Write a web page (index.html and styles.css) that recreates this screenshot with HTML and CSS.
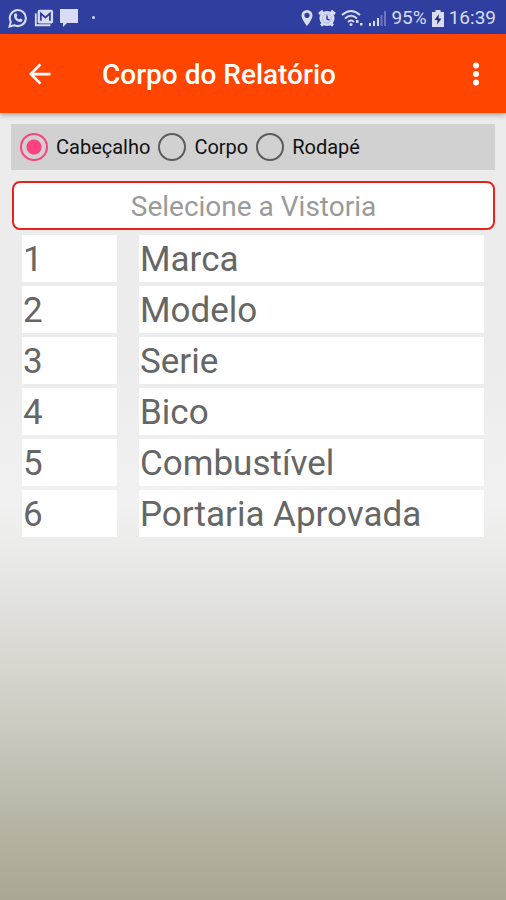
FILE: index.html
```html
<!DOCTYPE html>
<html lang="pt-BR">
<head>
<meta charset="utf-8">
<meta name="viewport" content="width=device-width, initial-scale=1">
<title>Corpo do Relatório</title>
<link rel="stylesheet" href="styles.css">
</head>
<body>
<div class="status">
  <div class="status-group">
    <svg width="20" height="20" viewBox="0 0 20 20" fill="none" stroke="currentColor" stroke-width="2"><path d="M1.500 18.500l1.300-4.600A8 8 0 1 1 6.200 17.200z"/><path d="M6.800 5.500l1.600-.3 1 2.500-1 1.200c.6 1.200 1.500 2 2.700 2.600l1.200-1.100 2.300 1.200c0 1.800-1.200 2.600-2.500 2.500C8.800 13.700 6.300 11 6 8c0-1 .2-1.900.8-2.500z" fill="currentColor" stroke="none"/></svg>
    <svg width="20" height="20" viewBox="0 0 22 20"><path d="M2 5v13h16" fill="none" stroke="currentColor" stroke-width="2"/><rect x="4" y="1" width="17" height="15" rx="2" fill="currentColor"/><path d="M7.500 13V5l5 4.500 5-4.500v8" fill="none" stroke="#303f9f" stroke-width="2"/></svg>
    <svg width="18" height="20" viewBox="0 0 18 20" fill="currentColor"><path d="M0 1h18v14H7l-4 4v-4H0z"/></svg>
    <span class="dot"></span>
  </div>
  <div class="status-group right">
    <svg width="12" height="18" viewBox="0 0 12 18"><path fill="currentColor" fill-rule="evenodd" d="M6 1a5.500 5.500 0 0 0-5.500 5.500C.5 10.500 6 17 6 17s5.500-6.500 5.500-10.500A5.500 5.500 0 0 0 6 1zm0 2.700a2.600 2.600 0 1 1 0 5.200 2.600 2.600 0 0 1 0-5.200z"/></svg>
    <svg width="18" height="18" viewBox="0 0 18 18"><g stroke="currentColor" stroke-width="3" fill="none"><path d="M1 5l4-3M17 5l-4-3M3 16.500L6 14M15 16.500L12 14"/></g><circle cx="9" cy="9.500" r="7.500" fill="currentColor"/><circle cx="9" cy="9.500" r="4.500" fill="none" stroke="#b0b7e2"/><path d="M9 6.500v3.500l2.500 1" fill="none" stroke="#303f9f" stroke-width="1.500"/></svg>
    <svg width="23" height="18" viewBox="0 0 23 18" fill="none" stroke="currentColor" stroke-width="2"><path d="M1 6q9-8 18 0M4 9.500q6-5.500 12 0M7 13q3-3 6 0"/><circle cx="10" cy="15.500" r="1.500" fill="currentColor" stroke="none"/><path d="M15 11l2.500 0v3h-2.500zM19 14h2.500v2.500H19z" fill="currentColor" stroke="none"/></svg>
    <svg width="17" height="18" viewBox="0 0 17 18" stroke="currentColor" stroke-width="2"><path d="M1 17v-3M5 17v-5M9 17V9"/><path d="M12.500 17V6M16 17V2" opacity=".35"/></svg>
    <span class="battery-text">95%</span>
    <svg width="12" height="18" viewBox="0 0 12 18"><path d="M3.500 1h5v2H12v15H0V3h3.500z" fill="currentColor"/><path d="M7 5l-4.500 6H5.500L5 15.500 9.500 9.500H6.500z" fill="#202a70"/></svg>
    <time>16:39</time>
  </div>
</div>
<header class="appbar">
  <button class="icon-button" type="button" aria-label="Voltar"><svg width="22" height="22" viewBox="0 0 24 24" fill="none" stroke="currentColor" stroke-width="3"><path d="M23.500 12H2.500M12.500 1.500L2 12l10.500 10.500"/></svg></button>
  <h1>Corpo do Relatório</h1>
  <button class="icon-button" type="button" aria-label="Mais opções"><svg width="8" height="24" viewBox="0 0 8 24" fill="currentColor"><circle cx="4" cy="3.500" r="3"/><circle cx="4" cy="12" r="3"/><circle cx="4" cy="20.500" r="3"/></svg></button>
</header>
<main>
  <fieldset class="sections" aria-label="Seção">
    <label><input type="radio" name="secao" checked>Cabeçalho</label>
    <label><input type="radio" name="secao">Corpo</label>
    <label><input type="radio" name="secao">Rodapé</label>
  </fieldset>
  <button class="picker" type="button">Selecione a Vistoria</button>
  <table class="fields">
    <tbody>
      <tr><td class="num">1</td><td>Marca</td></tr>
      <tr><td class="num">2</td><td>Modelo</td></tr>
      <tr><td class="num">3</td><td>Serie</td></tr>
      <tr><td class="num">4</td><td>Bico</td></tr>
      <tr><td class="num">5</td><td>Combustível</td></tr>
      <tr><td class="num">6</td><td>Portaria Aprovada</td></tr>
    </tbody>
  </table>
</main>
</body>
</html>
```
FILE: styles.css
```css
* {
  box-sizing: border-box;
}

body {
  margin: 0;
  min-height: 100vh;
  font-family: Roboto, "Liberation Sans", sans-serif;
  background: linear-gradient(#ececec 0%, #ececec 40%, #f1f1f1 56%, #ebebea 61%, #cfcec5 79%, #b6b3a4 92%, #aaa794 100%);
}

svg {
  display: block;
  flex: none;
}

.status {
  display: flex;
  align-items: center;
  justify-content: space-between;
  height: 34px;
  padding: 1px 10px 0 8px;
  background: #303f9f;
  color: #d8dcf4;
  font-size: 19px;
}

.status-group {
  display: flex;
  align-items: center;
  gap: 6px;
}

.status-group.right {
  gap: 5px;
}

.dot {
  width: 3px;
  height: 3px;
  margin-left: 8px;
  border-radius: 50%;
  background: currentColor;
}

.appbar {
  position: relative;
  display: flex;
  align-items: center;
  height: 79px;
  padding: 0 22px 0 20px;
  background: #ff4500;
  color: #fff;
  box-shadow: 0 2px 5px rgba(0, 0, 0, 0.3);
}

.appbar h1 {
  flex: 1;
  margin: 0 0 0 42px;
  padding-top: 3px;
  font-size: 28px;
  font-weight: 500;
  line-height: 32px;
}

.icon-button {
  display: grid;
  place-items: center;
  min-width: 16px;
  height: 40px;
  padding: 0;
  border: 0;
  background: none;
  color: inherit;
}

.icon-button:first-child {
  width: 40px;
}

.sections {
  display: flex;
  align-items: center;
  gap: 8px;
  height: 46px;
  margin: 11px 11px 0;
  padding: 0 9px;
  border: 0;
  background: #d1d1d1;
}

.sections label {
  display: flex;
  align-items: center;
  gap: 8px;
  font-size: 20px;
  color: #111;
}

.sections input {
  appearance: none;
  width: 28px;
  height: 28px;
  margin: 0;
  border: 2px solid #5c5c5c;
  border-radius: 50%;
}

.sections input:checked {
  border-color: #ff4081;
  background: radial-gradient(circle, #ff4081 7px, transparent 8px);
}

.picker {
  display: block;
  width: calc(100% - 23px);
  height: 49px;
  margin: 11px 11px 1px 12px;
  padding: 2px 0 0;
  border: 2px solid #e8231a;
  border-radius: 8px;
  background: #fff;
  color: #9a9a9a;
  font-family: inherit;
  font-size: 28px;
}

.fields {
  width: 100%;
  border-collapse: separate;
  border-spacing: 22px 4px;
  table-layout: fixed;
}

.fields td {
  height: 47px;
  padding: 3px 1px 0;
  background: #fff;
  color: #666;
  font-size: 35px;
  line-height: 44px;
}

.fields .num {
  width: 95px;
}
```
